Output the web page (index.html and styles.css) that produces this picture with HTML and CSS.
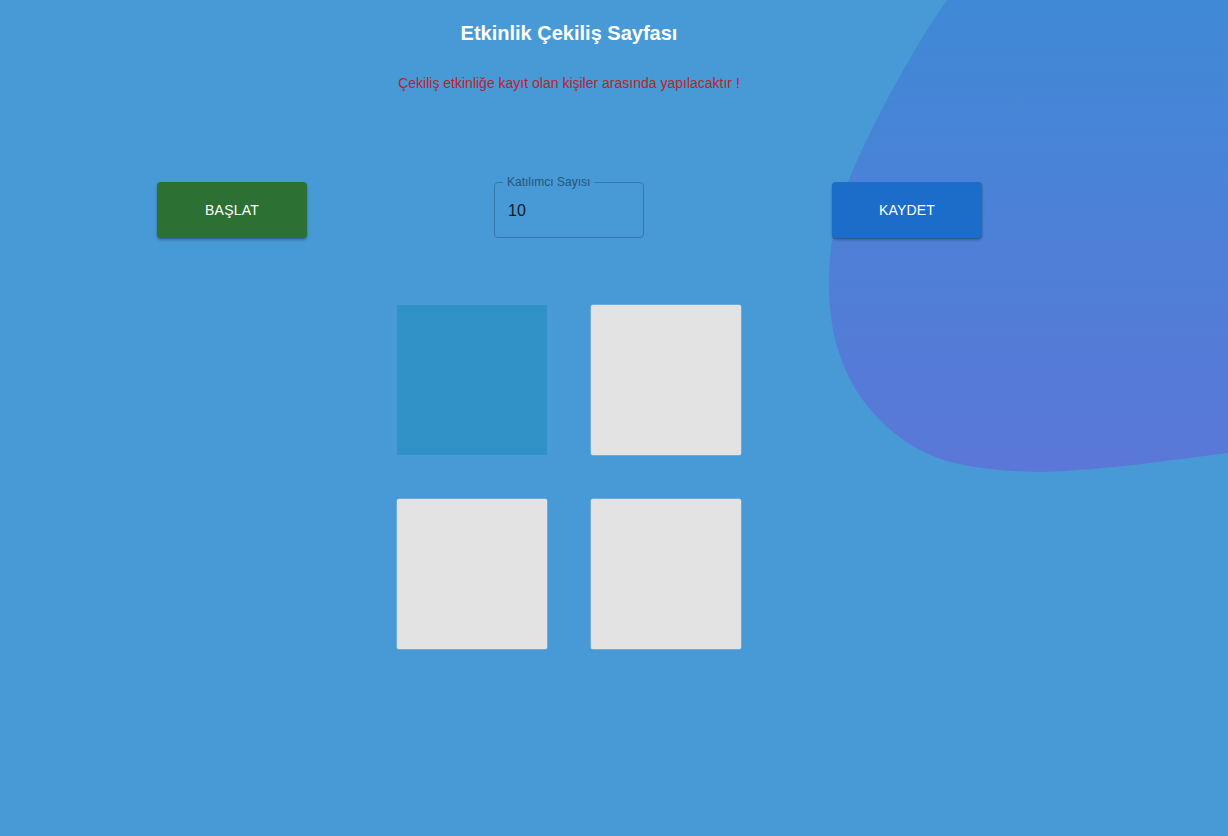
FILE: index.html
```html
<!DOCTYPE html>
<html lang="tr">
<head>
<meta charset="utf-8">
<title>Etkinlik Çekiliş Sayfası</title>
<link rel="stylesheet" href="styles.css">
</head>
<body>
<svg class="blob" viewBox="820 0 408 480" width="408" height="480" aria-hidden="true">
  <defs>
    <linearGradient id="bg" x1="0" y1="0" x2="0" y2="1">
      <stop offset="0" stop-color="#3f89d6"/>
      <stop offset="1" stop-color="#5b77d7"/>
    </linearGradient>
  </defs>
  <path fill="url(#bg)" d="M947,0 C915,45 880,110 855,165 C835,210 828,250 829,290 C830,340 845,385 880,420 C920,460 960,470 1040,472 C1110,470 1170,460 1228,453 L1228,0 Z"/>
</svg>
<main class="page">
  <h1 class="title">Etkinlik Çekiliş Sayfası</h1>
  <p class="notice">Çekiliş etkinliğe kayıt olan kişiler arasında yapılacaktır !</p>
  <div class="controls">
    <button class="btn btn-start">BAŞLAT</button>
    <fieldset class="field">
      <legend class="field-label">Katılımcı Sayısı</legend>
      <span class="field-value">10</span>
    </fieldset>
    <button class="btn btn-save">KAYDET</button>
  </div>
  <div class="cards">
    <div class="card card-active"></div>
    <div class="card"></div>
    <div class="card"></div>
    <div class="card"></div>
  </div>
</main>
</body>
</html>
```
FILE: styles.css
```css
* { box-sizing: border-box; }
html, body { margin: 0; padding: 0; }
body {
  width: 1228px;
  height: 836px;
  overflow: hidden;
  background: #479ad6;
  font-family: "Liberation Sans", Arial, sans-serif;
  position: relative;
}
.blob {
  position: absolute;
  top: 0;
  right: 0;
  z-index: 0;
}
.page {
  position: relative;
  z-index: 1;
  width: 1138px;
  display: flex;
  flex-direction: column;
  align-items: center;
}
.title {
  margin: 20px 0 0;
  font-size: 20px;
  line-height: 26px;
  font-weight: bold;
  color: #ffffff;
}
.notice {
  margin: 29px 0 0;
  font-size: 14px;
  line-height: 17px;
  color: #bd1f2b;
}
.controls {
  margin-top: 90px;
  width: 826px;
  padding-left: 1px;
  display: flex;
  align-items: flex-start;
}
.btn {
  flex: none;
  width: 150px;
  height: 56px;
  border: none;
  border-radius: 4px;
  color: #ffffff;
  font-family: "Liberation Sans", Arial, sans-serif;
  font-size: 14px;
  font-weight: 500;
  letter-spacing: 0.2px;
  box-shadow: 0 2px 3px rgba(0,0,0,0.25), 0 1px 1px rgba(0,0,0,0.15);
}
.btn-start { background: #2c7133; }
.btn-save { background: #1b6dc9; }
.field {
  flex: none;
  width: 150px;
  height: 62px;
  margin: -6px 188px 0 187px;
  padding: 0 13px;
  border: 1px solid #3579ad;
  border-radius: 4px;
  display: flex;
  align-items: center;
}
.field-label {
  padding: 0 4px;
  margin-left: -5px;
  font-size: 12px;
  line-height: 12px;
  color: #24557a;
}
.field-value {
  font-size: 16px;
  color: #0e1a24;
  margin-top: -4px;
}
.cards {
  margin-top: 67px;
  display: grid;
  grid-template-columns: 150px 150px;
  gap: 44px;
}
.card {
  width: 150px;
  height: 150px;
  background: #e3e3e3;
  border-radius: 2px;
  box-shadow: 0 0 0 0.5px rgba(255,255,255,0.4);
}
.card-active {
  background: #3192c8;
  border-radius: 0;
  box-shadow: none;
}
```
